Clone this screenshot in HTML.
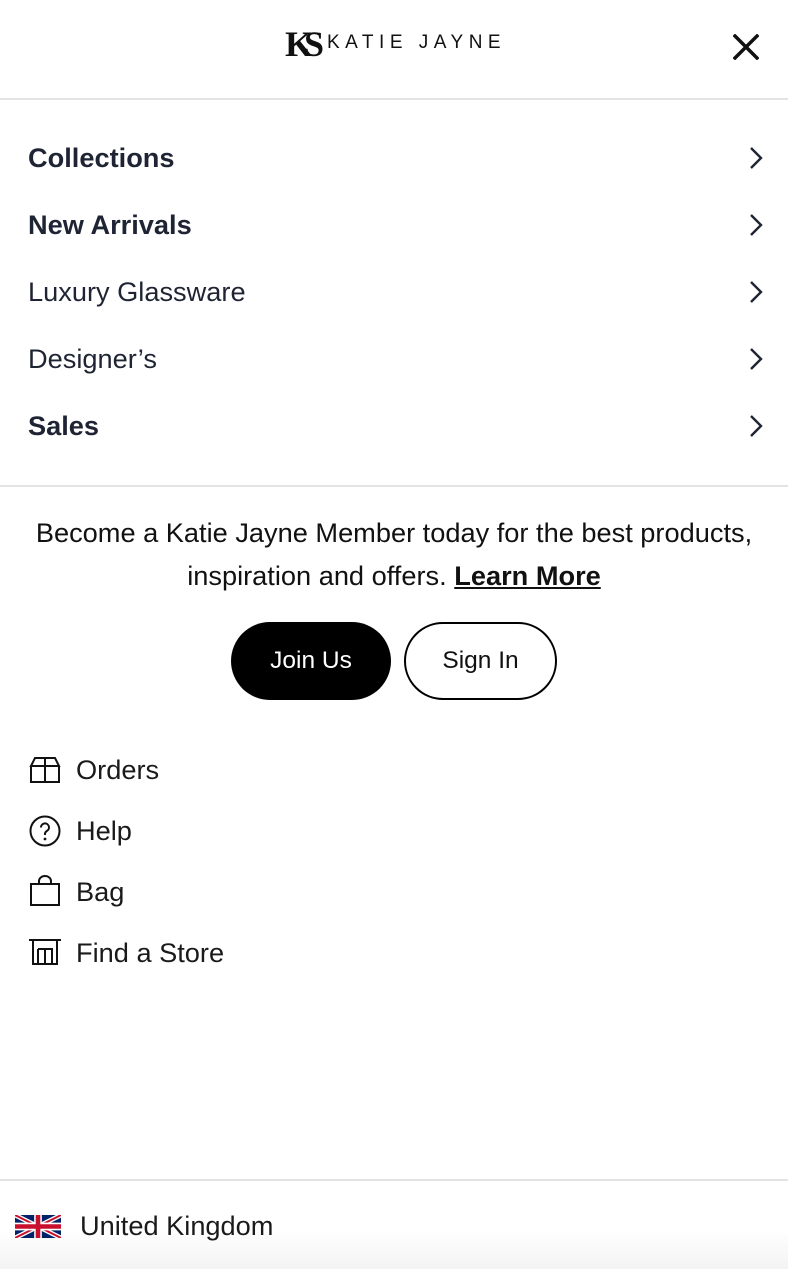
<!DOCTYPE html>
<html><head><meta charset="utf-8"><style>
*{margin:0;padding:0;box-sizing:border-box}
body{width:788px;height:1269px;background:#fff;font-family:"Liberation Sans",Arial,sans-serif;position:relative;overflow:hidden;color:#111}
.abs{position:absolute}
.hr{position:absolute;left:0;width:788px;height:2px;background:#e3e3e6}
.mi{position:absolute;left:28px;font-size:27.2px;color:#1e2433;line-height:30px}
.mi.b{font-weight:bold}
.chev{position:absolute;left:748px}
.lk{position:absolute;left:76px;font-size:27.2px;color:#1a1a1a;line-height:30px}
.ic{position:absolute;left:29px}
</style></head><body>
<div class="abs" style="left:285px;top:26px;font-family:'Liberation Serif',serif;font-size:36px;line-height:36px;font-weight:bold;color:#111;letter-spacing:-9px">KS</div>
<div class="abs" style="left:327px;top:32px;font-size:19px;letter-spacing:5.5px;color:#111;line-height:22px">KATIE JAYNE</div>
<svg class="abs" style="left:733px;top:34px" width="26" height="26" viewBox="0 0 26 26"><path d="M2 2L24 24M24 2L2 24" stroke="#111" stroke-width="3.5" stroke-linecap="square"/></svg>
<div class="hr" style="top:98px"></div>

<div class="mi b" style="top:143px">Collections</div>
<div class="mi b" style="top:210px">New Arrivals</div>
<div class="mi" style="top:277px">Luxury Glassware</div>
<div class="mi" style="top:344px">Designer’s</div>
<div class="mi b" style="top:411px">Sales</div>
<svg class="chev" style="top:146px" width="16" height="24"><path d="M3 2L13 12L3 22" fill="none" stroke="#1e2433" stroke-width="2.4"/></svg>
<svg class="chev" style="top:213px" width="16" height="24"><path d="M3 2L13 12L3 22" fill="none" stroke="#1e2433" stroke-width="2.4"/></svg>
<svg class="chev" style="top:280px" width="16" height="24"><path d="M3 2L13 12L3 22" fill="none" stroke="#1e2433" stroke-width="2.4"/></svg>
<svg class="chev" style="top:347px" width="16" height="24"><path d="M3 2L13 12L3 22" fill="none" stroke="#1e2433" stroke-width="2.4"/></svg>
<svg class="chev" style="top:414px" width="16" height="24"><path d="M3 2L13 12L3 22" fill="none" stroke="#1e2433" stroke-width="2.4"/></svg>
<div class="hr" style="top:485px"></div>

<div class="abs" style="left:0;top:511px;width:788px;text-align:center;font-size:27.2px;line-height:43px;color:#111;white-space:nowrap">Become a Katie Jayne Member today for the best products,<br>inspiration and offers. <b style="text-decoration:underline">Learn More</b></div>
<div class="abs" style="left:231px;top:622px;width:160px;height:78px;border-radius:39px;background:#000;color:#fff;font-size:24.5px;line-height:78px;text-align:center">Join Us</div>
<div class="abs" style="left:404px;top:622px;width:153px;height:78px;border-radius:39px;border:2px solid #000;color:#111;font-size:24.5px;line-height:74px;text-align:center">Sign In</div>

<svg class="ic" style="top:756px" width="32" height="28" viewBox="0 0 32 28"><path d="M2 10V26H30V10M2 10L6 2H26L30 10ZM2 10H30M16 2V26" fill="none" stroke="#111" stroke-width="2"/></svg>
<div class="lk" style="top:755px">Orders</div>
<svg class="ic" style="top:815px" width="32" height="32" viewBox="0 0 32 32"><circle cx="16" cy="16" r="14.5" fill="none" stroke="#111" stroke-width="2"/><path d="M12 12.5a4 4 0 1 1 6 3.4c-1.3.8-2 1.6-2 3.1v1" fill="none" stroke="#111" stroke-width="2"/><circle cx="16" cy="24" r="1.4" fill="#111"/></svg>
<div class="lk" style="top:816px">Help</div>
<svg class="ic" style="top:875px" width="32" height="32" viewBox="0 0 32 32"><path d="M2 9H30V30H2ZM10 9V6a6 5 0 0 1 12 0V9" fill="none" stroke="#111" stroke-width="2"/></svg>
<div class="lk" style="top:877px">Bag</div>
<svg class="ic" style="top:938px" width="32" height="28" viewBox="0 0 32 28"><path d="M0 2H32M4 2V26H28V2M9 11H23V26M9 11V26M16 11V26" fill="none" stroke="#111" stroke-width="2"/></svg>
<div class="lk" style="top:938px">Find a Store</div>

<div class="hr" style="top:1179px"></div>
<div class="abs" style="left:0;top:1181px;width:788px;height:88px;background:linear-gradient(#fff 55%,#f3f3f3)"></div>
<svg class="abs" style="left:15px;top:1215px" width="46" height="23" viewBox="0 0 60 30"><rect width="60" height="30" fill="#012169"/><path d="M0 0L60 30M60 0L0 30" stroke="#fff" stroke-width="6"/><path d="M0 0L60 30M60 0L0 30" stroke="#C8102E" stroke-width="2.5"/><path d="M30 0V30M0 15H60" stroke="#fff" stroke-width="10"/><path d="M30 0V30M0 15H60" stroke="#C8102E" stroke-width="6"/></svg>
<div class="abs" style="left:80px;top:1211px;font-size:27.2px;line-height:30px;color:#1a1a1a">United Kingdom</div>
</body></html>
